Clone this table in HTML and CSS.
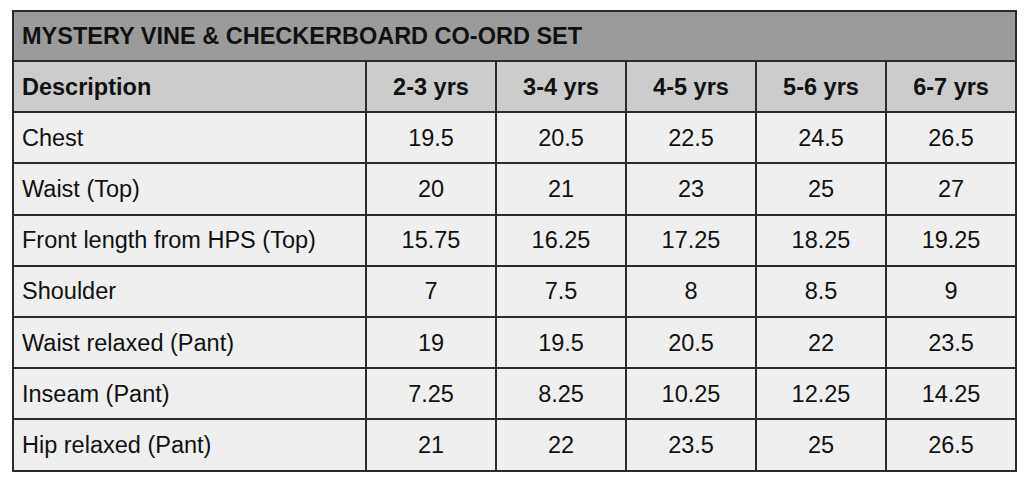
FILE: index.html
```html
<!DOCTYPE html>
<html>
<head>
<meta charset="utf-8">
<link rel="stylesheet" href="styles.css">
</head>
<body>
<table class="size-table">
  <colgroup>
    <col class="col-desc">
    <col class="col-size"><col class="col-size"><col class="col-size"><col class="col-size"><col class="col-size">
  </colgroup>
  <thead>
    <tr class="title-row"><th colspan="6">MYSTERY VINE &amp; CHECKERBOARD CO-ORD SET</th></tr>
    <tr class="head-row">
      <th class="desc">Description</th>
      <th>2-3 yrs</th><th>3-4 yrs</th><th>4-5 yrs</th><th>5-6 yrs</th><th>6-7 yrs</th>
    </tr>
  </thead>
  <tbody>
    <tr><td class="desc">Chest</td><td>19.5</td><td>20.5</td><td>22.5</td><td>24.5</td><td>26.5</td></tr>
    <tr><td class="desc">Waist (Top)</td><td>20</td><td>21</td><td>23</td><td>25</td><td>27</td></tr>
    <tr><td class="desc">Front length from HPS (Top)</td><td>15.75</td><td>16.25</td><td>17.25</td><td>18.25</td><td>19.25</td></tr>
    <tr><td class="desc">Shoulder</td><td>7</td><td>7.5</td><td>8</td><td>8.5</td><td>9</td></tr>
    <tr><td class="desc">Waist relaxed (Pant)</td><td>19</td><td>19.5</td><td>20.5</td><td>22</td><td>23.5</td></tr>
    <tr><td class="desc">Inseam (Pant)</td><td>7.25</td><td>8.25</td><td>10.25</td><td>12.25</td><td>14.25</td></tr>
    <tr><td class="desc">Hip relaxed (Pant)</td><td>21</td><td>22</td><td>23.5</td><td>25</td><td>26.5</td></tr>
  </tbody>
</table>
</body>
</html>
```
FILE: styles.css
```css
html, body {
  margin: 0;
  padding: 0;
  background: #ffffff;
}
body {
  padding: 10px 0 0 12px;
  font-family: "Liberation Sans", Arial, sans-serif;
  color: #111;
}
.size-table {
  border-collapse: collapse;
  table-layout: fixed;
  width: 1002px;
  font-size: 23.5px;
}
.col-desc { width: 353px; }
.col-size { width: 130px; }
.size-table th,
.size-table td {
  border: 2px solid #2b2b2b;
  height: 51.2px;
  padding: 1px 8px 0;
  text-align: center;
  box-sizing: border-box;
  vertical-align: middle;
}
.size-table .desc { text-align: left; }
.title-row th {
  background: #9b9b9b;
  text-align: left;
  font-weight: bold;
  height: 50px;
}
.head-row th {
  background: #cccccc;
  font-weight: bold;
}
.size-table td {
  background: #efefef;
}
```
